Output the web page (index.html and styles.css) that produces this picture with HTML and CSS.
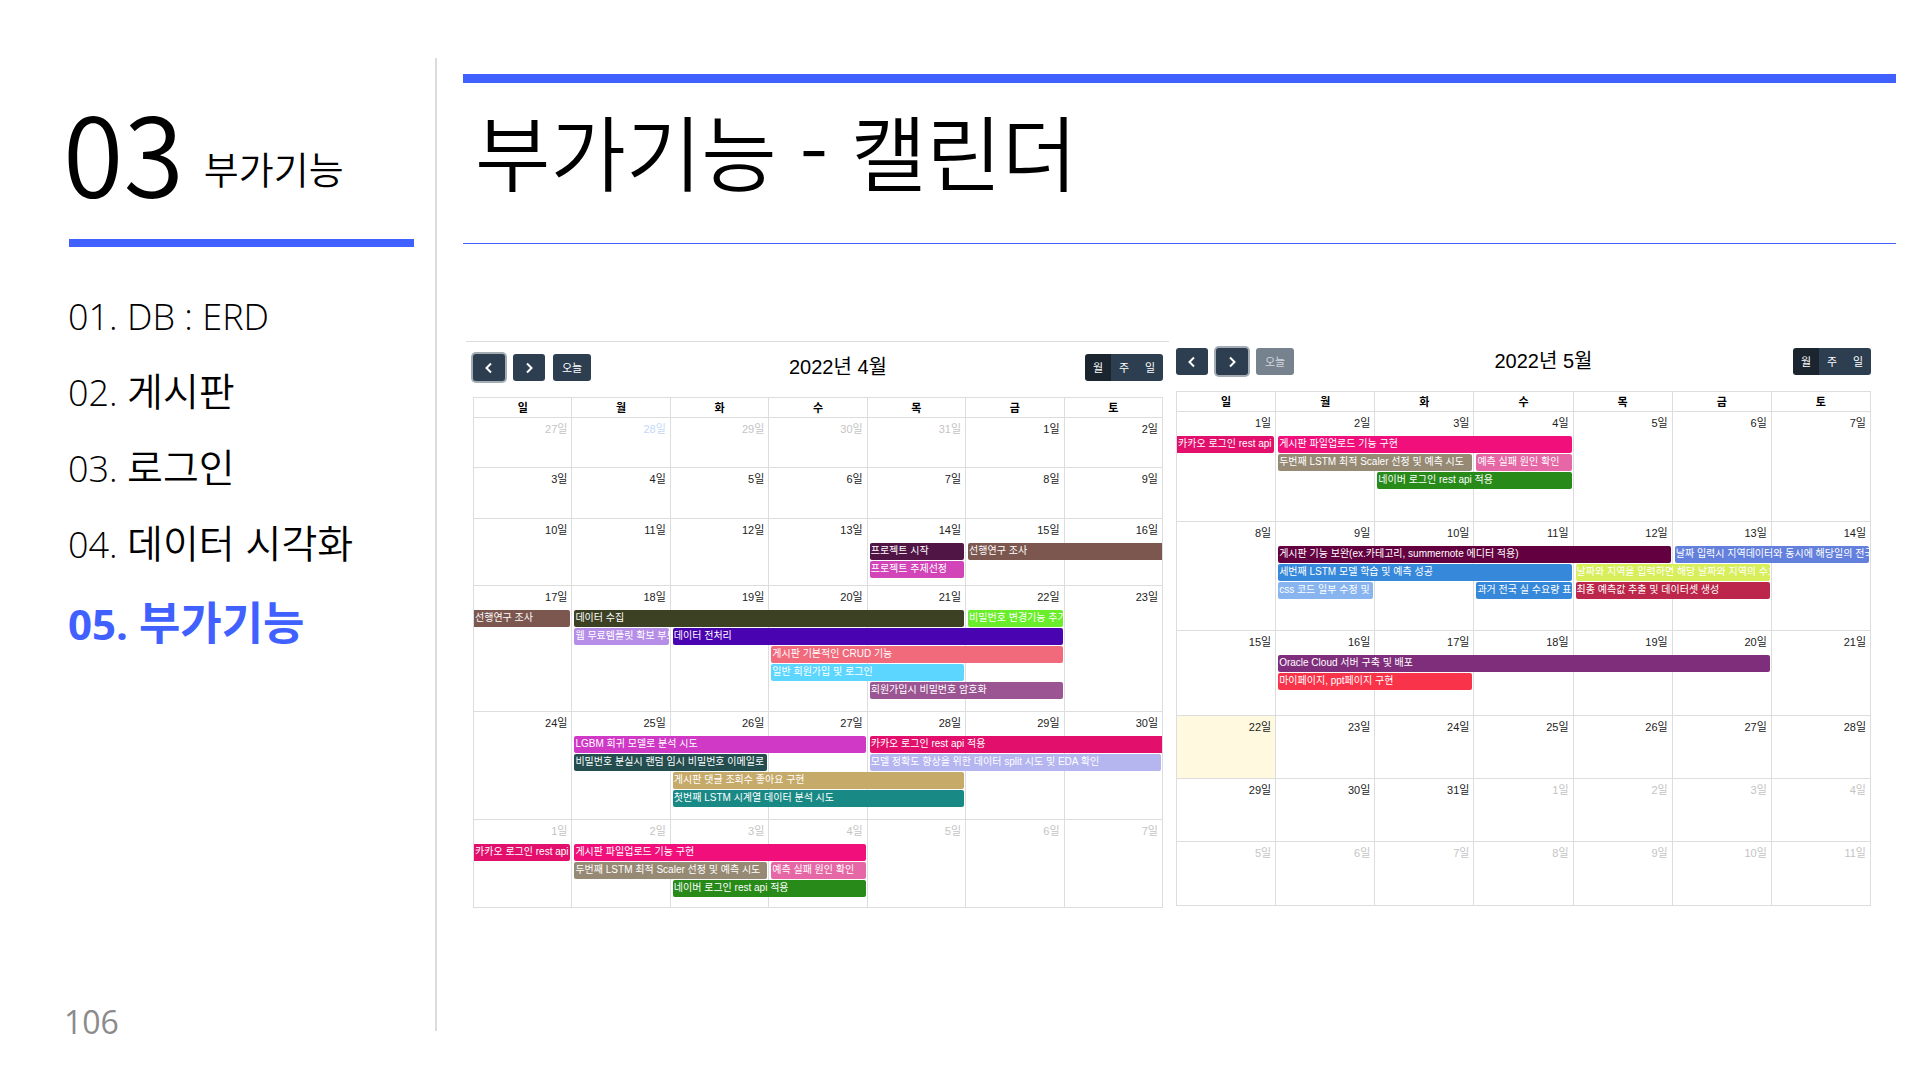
FILE: index.html
```html
<!DOCTYPE html>
<html lang="ko">
<head>
<meta charset="utf-8">
<title>부가기능 - 캘린더</title>
<link rel="stylesheet" href="styles.css">
</head>
<body>
<aside class="sidebar">
  <header class="section-head"><span class="section-no">03</span><span class="section-name">부가기능</span></header>
  <nav>
    <ul class="toc">
      <li><a href="#erd"><span class="latin">01. DB : ERD</span></a></li>
      <li><a href="#board"><span class="latin">02. </span>게시판</a></li>
      <li><a href="#login"><span class="latin">03. </span>로그인</a></li>
      <li><a href="#chart"><span class="latin">04. </span>데이터 시각화</a></li>
      <li><a href="#extra" class="current"><span class="latin">05. </span>부가기능</a></li>
    </ul>
  </nav>
  <footer class="page-no">106</footer>
</aside>
<main class="slide">
  <h1>부가기능 - 캘린더</h1>
  <div class="calendars">
    <section class="calendar ruled">
      <div class="toolbar">
        <div class="nav-buttons">
          <button class="btn arrow focused" aria-label="이전"><svg viewBox="0 0 12 12"><path d="M8 1.5 3.5 6 8 10.500"/></svg></button>
          <button class="btn arrow" aria-label="다음"><svg viewBox="0 0 12 12"><path d="M4 1.5 8.500 6 4 10.500"/></svg></button>
          <button class="btn today-btn">오늘</button>
        </div>
        <h2>2022년 4월</h2>
        <div class="views"><button class="btn active">월</button><button class="btn">주</button><button class="btn">일</button></div>
      </div>
      <table>
        <thead><tr><th>일</th><th>월</th><th>화</th><th>수</th><th>목</th><th>금</th><th>토</th></tr></thead>
        <tbody>
        <tr class="h50"><td class="other"><time>27일</time></td><td class="other link"><time>28일</time></td><td class="other"><time>29일</time></td><td class="other"><time>30일</time></td><td class="other"><time>31일</time></td><td><time>1일</time></td><td><time>2일</time></td></tr>
        <tr class="h51"><td><time>3일</time></td><td><time>4일</time></td><td><time>5일</time></td><td><time>6일</time></td><td><time>7일</time></td><td><time>8일</time></td><td><time>9일</time></td></tr>
        <tr class="h67"><td><time>10일</time></td><td><time>11일</time></td><td><time>12일</time></td><td><time>13일</time></td>
          <td><time>14일</time><ul><li class="plum">프로젝트 시작</li><li class="orchid">프로젝트 주제선정</li></ul></td>
          <td><time>15일</time><ul><li class="brown span2 to-next">선행연구 조사</li></ul></td><td><time>16일</time></td></tr>
        <tr class="h126"><td><time>17일</time><ul><li class="brown from-prev">선행연구 조사</li></ul></td>
          <td><time>18일</time><ul><li class="moss span4">데이터 수집</li><li class="lilac">웹 무료템플릿 확보 부트스트랩</li></ul></td>
          <td><time>19일</time><ul><li class="indigo span4 lane2">데이터 전처리</li></ul></td>
          <td><time>20일</time><ul><li class="coral span3 lane3">게시판 기본적인 CRUD 기능</li><li class="cyan span2 lane4">일반 회원가입 및 로그인</li></ul></td>
          <td><time>21일</time><ul><li class="mauve span2 lane5">회원가입시 비밀번호 암호화</li></ul></td>
          <td><time>22일</time><ul><li class="lime">비밀번호 변경기능 추가</li></ul></td><td><time>23일</time></td></tr>
        <tr class="h108"><td><time>24일</time></td>
          <td><time>25일</time><ul><li class="magenta span3">LGBM 회귀 모델로 분석 시도</li><li class="pine span2">비밀번호 분실시 랜덤 임시 비밀번호 이메일로 발송</li></ul></td>
          <td><time>26일</time><ul><li class="sand span3 lane3">게시판 댓글 조회수 좋아요 구현</li><li class="teal span3 lane4">첫번째 LSTM 시계열 데이터 분석 시도</li></ul></td>
          <td><time>27일</time></td>
          <td><time>28일</time><ul><li class="crimson span3 to-next">카카오 로그인 rest api 적용</li><li class="lavender span3">모델 정확도 향상을 위한 데이터 split 시도 및 EDA 확인</li></ul></td>
          <td><time>29일</time></td><td><time>30일</time></td></tr>
        <tr class="h88"><td class="other"><time>1일</time><ul><li class="crimson from-prev">카카오 로그인 rest api 적용</li></ul></td>
          <td class="other"><time>2일</time><ul><li class="pink span3">게시판 파일업로드 기능 구현</li><li class="taupe span2">두번째 LSTM 최적 Scaler 선정 및 예측 시도</li></ul></td>
          <td class="other"><time>3일</time><ul><li class="green span2 lane3">네이버 로그인 rest api 적용</li></ul></td>
          <td class="other"><time>4일</time><ul><li class="rose lane2">예측 실패 원인 확인</li></ul></td>
          <td class="other"><time>5일</time></td><td class="other"><time>6일</time></td><td class="other"><time>7일</time></td></tr>
        </tbody>
      </table>
    </section>
    <section class="calendar">
      <div class="toolbar">
        <div class="nav-buttons">
          <button class="btn arrow" aria-label="이전"><svg viewBox="0 0 12 12"><path d="M8 1.5 3.5 6 8 10.500"/></svg></button>
          <button class="btn arrow focused" aria-label="다음"><svg viewBox="0 0 12 12"><path d="M4 1.5 8.500 6 4 10.500"/></svg></button>
          <button class="btn today-btn" disabled>오늘</button>
        </div>
        <h2>2022년 5월</h2>
        <div class="views"><button class="btn active">월</button><button class="btn">주</button><button class="btn">일</button></div>
      </div>
      <table>
        <thead><tr><th>일</th><th>월</th><th>화</th><th>수</th><th>목</th><th>금</th><th>토</th></tr></thead>
        <tbody>
        <tr class="h110"><td><time>1일</time><ul><li class="crimson from-prev">카카오 로그인 rest api 적용</li></ul></td>
          <td><time>2일</time><ul><li class="pink span3">게시판 파일업로드 기능 구현</li><li class="taupe span2">두번째 LSTM 최적 Scaler 선정 및 예측 시도</li></ul></td>
          <td><time>3일</time><ul><li class="green span2 lane3">네이버 로그인 rest api 적용</li></ul></td>
          <td><time>4일</time><ul><li class="rose lane2">예측 실패 원인 확인</li></ul></td>
          <td><time>5일</time></td><td><time>6일</time></td><td><time>7일</time></td></tr>
        <tr class="h109"><td><time>8일</time></td>
          <td><time>9일</time><ul><li class="wine span4">게시판 기능 보완(ex.카테고리, summernote 에디터 적용)</li><li class="blue span3">세번째 LSTM 모델 학습 및 예측 성공</li><li class="sky">css 코드 일부 수정 및 .</li></ul></td>
          <td><time>10일</time></td>
          <td><time>11일</time><ul><li class="blue lane3">과거 전국 실 수요량 표시</li></ul></td>
          <td><time>12일</time><ul><li class="yellow span2 lane2">날짜와 지역을 입력하면 해당 날짜와 지역의 수요량</li><li class="red span2 lane3">최종 예측값 추출 및 데이터셋 생성</li></ul></td>
          <td><time>13일</time><ul><li class="iris span2">날짜 입력시 지역데이터와 동시에 해당일의 전국</li></ul></td><td><time>14일</time></td></tr>
        <tr class="h85"><td><time>15일</time></td>
          <td><time>16일</time><ul><li class="purple span5">Oracle Cloud 서버 구축 및 배포</li><li class="scarlet span2">마이페이지, ppt페이지 구현</li></ul></td>
          <td><time>17일</time></td><td><time>18일</time></td><td><time>19일</time></td><td><time>20일</time></td><td><time>21일</time></td></tr>
        <tr class="h63"><td class="today"><time>22일</time></td><td><time>23일</time></td><td><time>24일</time></td><td><time>25일</time></td><td><time>26일</time></td><td><time>27일</time></td><td><time>28일</time></td></tr>
        <tr class="h63"><td><time>29일</time></td><td><time>30일</time></td><td><time>31일</time></td><td class="other"><time>1일</time></td><td class="other"><time>2일</time></td><td class="other"><time>3일</time></td><td class="other"><time>4일</time></td></tr>
        <tr class="h64"><td class="other"><time>5일</time></td><td class="other"><time>6일</time></td><td class="other"><time>7일</time></td><td class="other"><time>8일</time></td><td class="other"><time>9일</time></td><td class="other"><time>10일</time></td><td class="other"><time>11일</time></td></tr>
        </tbody>
      </table>
    </section>
  </div>
</main>
</body>
</html>
```
FILE: styles.css
```css
* { box-sizing: border-box; }
body {
  margin: 0;
  min-height: 100vh;
  display: grid;
  grid-template-columns: 435px 1fr;
  background: #fff;
  color: #000;
  font-family: "Noto Sans CJK KR", sans-serif;
  font-weight: 350;
}
ul { list-style: none; margin: 0; padding: 0; }

/* Sidebar */
.sidebar { display: flex; flex-direction: column; padding: 98px 21px 30px 64px; }
.section-head {
  display: flex;
  align-items: flex-start;
  gap: 20px;
  height: 149px;
  margin-left: 5px;
  border-bottom: 8px solid #4060ff;
  white-space: nowrap;
}
.section-no { font-size: 110px; line-height: 104px; margin-left: -6px; }
.section-name { font-size: 38px; line-height: 140px; }
.toc { margin: 28px 0 0 4px; }
.toc a { display: block; color: #000; text-decoration: none; font-size: 39px; line-height: 76px; white-space: nowrap; }
.latin { font-family: "Open Sans", sans-serif; font-size: 36px; line-height: 1; white-space: pre; }
.toc a.current { color: #4060ff; font-size: 45px; line-height: 84px; font-weight: 700; }
.current .latin { font-size: 42px; }
.page-no { margin-top: auto; font: 400 32px/36px "Open Sans", sans-serif; color: #8b8b8b; }

/* Slide body */
.slide { margin: 58px 16px 39px 0; padding: 16px 0 0 26px; border-left: 2px solid #dcdcdc; min-width: 0; }
h1 {
  margin: 0;
  height: 170px;
  padding: 7px 0 0 12px;
  border-top: 9px solid #4060ff;
  border-bottom: 1px solid #4060ff;
  font-size: 82px;
  line-height: 120px;
  font-weight: 350;
}
.calendars { display: grid; grid-template-columns: 703fr 695fr; gap: 7px; padding: 97px 25px 0 3px; align-items: start; }

/* Calendar */
.calendar { padding-top: 7px; font-family: "Liberation Sans", "Noto Sans CJK KR", sans-serif; font-weight: 400; min-width: 0; }
.calendar.ruled { border-top: 1px solid #dcdcdc; padding: 12px 6px 0 7px; }
.toolbar { display: flex; justify-content: space-between; align-items: center; height: 27px; margin-bottom: 16px; }
h2 { margin: 0; font-size: 20px; line-height: 27px; font-weight: 400; }
.nav-buttons { display: flex; gap: 8px; }
.views { display: flex; border-radius: 3px; overflow: hidden; }
.btn {
  display: flex;
  align-items: center;
  justify-content: center;
  width: 26px;
  height: 27px;
  padding: 0 0 2px;
  border: 0;
  background: #2c3e50;
  color: #fff;
  font: 11px "Noto Sans CJK KR", sans-serif;
}
.nav-buttons .btn { border-radius: 3px; }
.btn.arrow { width: 32px; padding: 1px 0 0; }
.btn.today-btn { width: 38px; }
.btn.active { background: #1a252f; }
.btn.focused { box-shadow: 0 0 0 2px #a3abb3; }
.btn:disabled { background: #76828e; color: #d4d8dc; }
.btn svg { width: 12px; height: 12px; fill: none; stroke: #fff; stroke-width: 2; }

table { width: 100%; table-layout: fixed; border-collapse: collapse; }
th, td { border: 1px solid #ddd; padding: 0; }
th { height: 20px; font-size: 11px; line-height: 18px; font-weight: 700; }
td { vertical-align: top; font-size: 11px; color: #222; }
time { display: block; height: 24px; padding-right: 4px; line-height: 22px; text-align: right; }
.other time { color: #c4c4c4; }
.link time { color: #c2d9f7; }
.today { background: #fff9df; }
.h50 { height: 50px; }
.h51 { height: 51px; }
.h63 { height: 63px; }
.h64 { height: 64px; }
.h67 { height: 67px; }
.h85 { height: 85px; }
.h88 { height: 88px; }
.h108 { height: 108px; }
.h109 { height: 109px; }
.h110 { height: 110px; }
.h126 { height: 126px; }

/* Events: each starts in its first day and stretches over --days columns */
td ul { display: grid; grid-template-columns: 100%; grid-auto-rows: 17px; row-gap: 1px; }
td li {
  --days: 1;
  position: relative;
  z-index: 1;
  width: calc((100% + 1px) * var(--days) - 4px);
  margin-left: 2px;
  padding-left: 1px;
  border-radius: 2px;
  overflow: hidden;
  white-space: nowrap;
  color: #fff;
  font-size: 10px;
  line-height: 15px;
}
.span2 { --days: 2; }
.span3 { --days: 3; }
.span4 { --days: 4; }
.span5 { --days: 5; }
.lane2 { grid-row: 2; }
.lane3 { grid-row: 3; }
.lane4 { grid-row: 4; }
.lane5 { grid-row: 5; }
.from-prev { margin-left: 0; width: calc(100% - 1px); border-radius: 0 2px 2px 0; }
.to-next { width: calc((100% + 1px) * var(--days) - 3px); border-radius: 2px 0 0 2px; }

.plum { background: #501445; }
.orchid { background: #d145b8; }
.brown { background: #7b574f; }
.moss { background: #3d4124; }
.lilac { background: #b68ee8; }
.indigo { background: #4a03b0; }
.coral { background: #f06a7b; }
.cyan { background: #5dd6ff; }
.mauve { background: #9a5592; }
.lime { background: #6aee2b; }
.magenta { background: #d038c6; }
.pine { background: #234d4e; }
.sand { background: #c5aa6a; }
.teal { background: #188985; }
.crimson { background: #e20f6c; }
.lavender { background: #b5b5f0; }
.pink { background: #f1107b; }
.taupe { background: #978a74; }
.rose { background: #e667a5; }
.green { background: #288a19; }
.wine { background: #63003f; }
.blue { background: #3688da; }
.sky { background: #88b4f0; }
.yellow { background: #d8ee5a; }
.red { background: #bb264a; }
.iris { background: #6380dc; }
.purple { background: #7f2e7c; }
.scarlet { background: #f93349; }
```
